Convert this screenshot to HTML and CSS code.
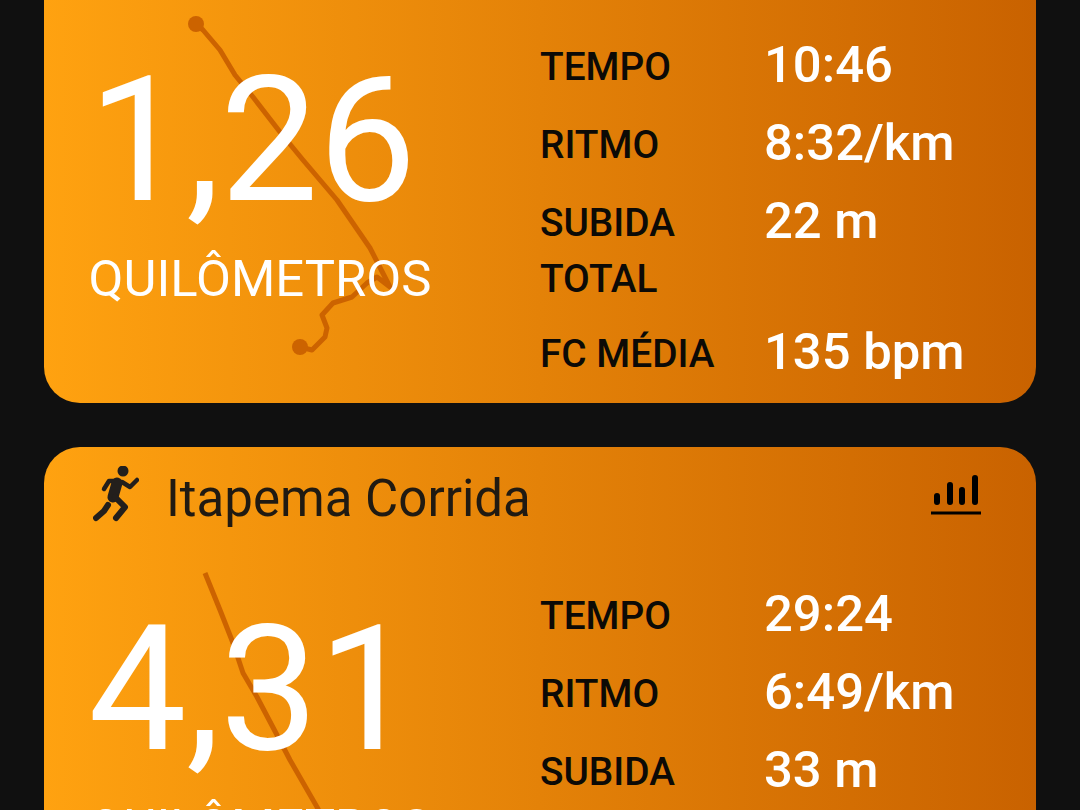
FILE: index.html
```html
<!DOCTYPE html>
<html lang="pt">
<head>
<meta charset="utf-8">
<title>Atividades</title>
<link rel="stylesheet" href="styles.css">
</head>
<body>
<main class="feed">
  <article class="card card-first">
    <div class="body">
      <svg class="route route-a" viewBox="0 0 240 370" width="240" height="370" aria-hidden="true">
        <path class="line" d="M16 24 L23 30 L40 50 L55 75 L73 97 L100 132 L123 160 L157 200 L190 248 L210 287 L197 277 L187 283 L172 297 L153 303 L142 315 L147 328 L145 337 L132 350 L120 347"></path>
        <circle class="dot" cx="16" cy="24" r="8"></circle>
        <circle class="dot" cx="120" cy="347" r="8"></circle>
      </svg>
      <div class="summary">
        <div class="distance">1,26</div>
        <div class="unit">QUILÔMETROS</div>
      </div>
      <dl class="stats">
        <dt>TEMPO</dt><dd>10:46</dd>
        <dt>RITMO</dt><dd>8:32/km</dd>
        <dt>SUBIDA TOTAL</dt><dd>22 m</dd>
        <dt class="tight">FC MÉDIA</dt><dd class="tight">135 bpm</dd>
      </dl>
    </div>
  </article>
  <article class="card">
    <header class="head">
      <svg class="run" viewBox="13 11 46 56" width="46" height="56" aria-hidden="true">
        <circle cx="43" cy="16" r="5.5"></circle>
        <path class="limb thin" d="M42 27 L50 32 L57 25"></path>
        <path class="limb thin" d="M37 26 L29 26 L24 34"></path>
        <path class="limb torso" d="M37 28 L33 42"></path>
        <path class="limb" d="M35 42 L45 52 L36 63"></path>
        <path class="limb" d="M28 50 L24 56 L16 63"></path>
      </svg>
      <h2 class="title">Itapema Corrida</h2>
      <svg class="chart" viewBox="0 0 50 41" width="50" height="41" aria-hidden="true">
        <path class="axis" d="M0 39 H50"></path>
        <path class="bars" d="M6 22 V28 M19 11 V28 M31 16 V28 M44 4 V28"></path>
      </svg>
    </header>
    <div class="body">
      <svg class="route route-b" viewBox="0 0 240 300" width="240" height="300" aria-hidden="true">
        <path class="line" d="M25 26 L40 63 L53 96 L63 126 L77 150 L97 188 L110 213 L137 260 L150 285"></path>
      </svg>
      <div class="summary">
        <div class="distance">4,31</div>
        <div class="unit">QUILÔMETROS</div>
      </div>
      <dl class="stats">
        <dt>TEMPO</dt><dd>29:24</dd>
        <dt>RITMO</dt><dd>6:49/km</dd>
        <dt>SUBIDA TOTAL</dt><dd>33 m</dd>
      </dl>
    </div>
  </article>
</main>
</body>
</html>
```
FILE: styles.css
```css
html, body {
  margin: 0;
  height: 810px;
  overflow: hidden;
  background: #101010;
}
.feed {
  display: flex;
  flex-direction: column;
  gap: 44px;
  padding: 0 44px;
  font-family: Roboto, "Liberation Sans", sans-serif;
}
.card {
  border-radius: 36px;
  background: linear-gradient(90deg, #ffa210 0%, #c96200 100%);
  color: #fff;
}
.card-first {
  margin-top: -40px;
  padding-top: 38px;
}
.head {
  display: flex;
  align-items: center;
  height: 100px;
  padding: 0 55px 0 49px;
  color: #201a12;
}
.run { flex: none; fill: #231f1c; margin-top: -6px; }
.limb {
  fill: none;
  stroke: #231f1c;
  stroke-width: 6;
  stroke-linecap: round;
  stroke-linejoin: round;
}
.thin { stroke-width: 4.5; }
.torso { stroke-width: 11; }
.title {
  margin: 4px 0 0 27px;
  flex: 1;
  font-size: 51px;
  font-weight: 400;
  line-height: 56px;
}
.chart { flex: none; margin-top: -6px; }
.axis { stroke: #000; stroke-width: 3; }
.bars { stroke: #000; stroke-width: 6; stroke-linecap: round; }
.body {
  position: relative;
  display: flex;
}
.route { position: absolute; }
.route-a { left: 136px; top: 2px; }
.route-b { left: 136px; top: 0; }
.line { fill: none; stroke: #cc6300; stroke-width: 5; stroke-linejoin: round; }
.dot { fill: #cc6300; }
.summary {
  position: relative;
  width: 432px;
  flex: none;
  padding-top: 40px;
  text-align: center;
}
.distance {
  font-size: 175px;
  line-height: 206px;
  letter-spacing: -0.5px;
  padding-right: 16px;
}
.unit {
  font-size: 50.8px;
  line-height: 56px;
  margin-top: 7px;
}
.stats {
  position: relative;
  display: grid;
  grid-template-columns: 224px 1fr;
  row-gap: 22px;
  margin: 0 0 0 64px;
  padding: 41px 0 21px;
  align-items: start;
}
.stats dt {
  font-size: 38.8px;
  font-weight: 500;
  line-height: 56px;
  color: #0c0a06;
  width: 190px;
}
.stats dd {
  margin: -2px 0 0;
  font-size: 50.8px;
  font-weight: 500;
  line-height: 56px;
  color: #fff;
}
.stats dt.tight { margin-top: -3px; }
.stats dd.tight { margin-top: -5px; }
```
